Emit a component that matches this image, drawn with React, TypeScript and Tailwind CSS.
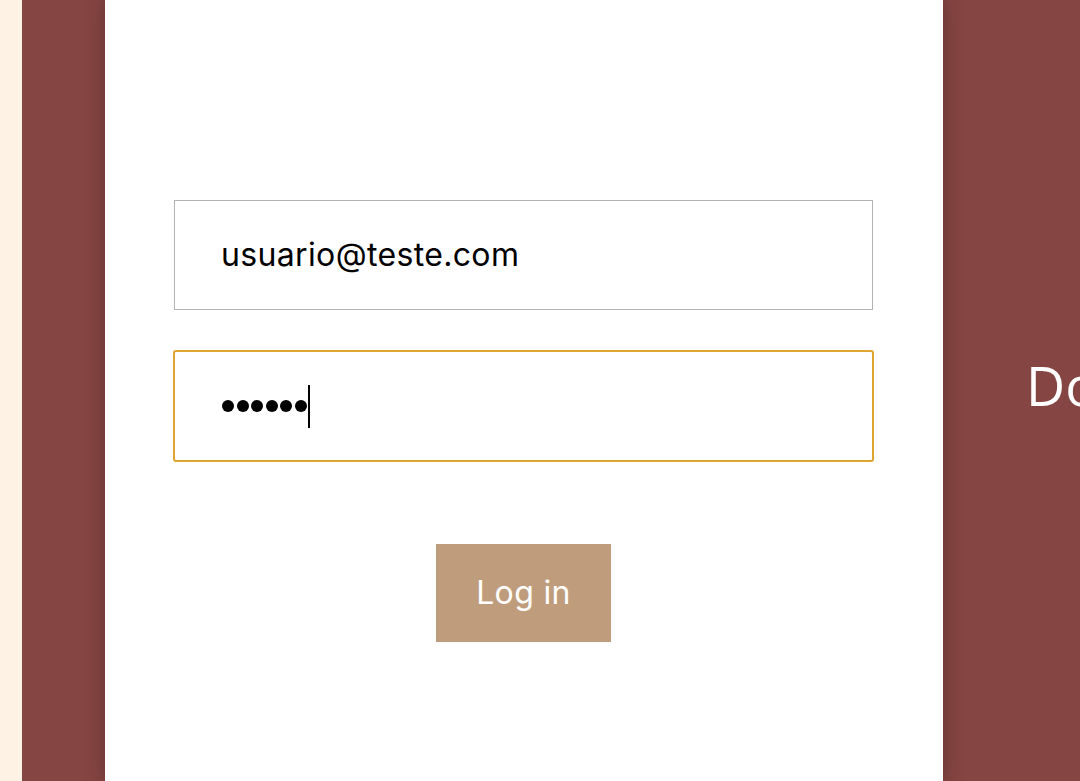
export default function App() {
  return (
    <main className="flex h-[781px] w-full overflow-hidden bg-[#fdf2e4]">
      <div className="w-[22px] shrink-0 bg-[#fdf2e4]" />
      <div className="w-[83px] shrink-0 bg-[#854542]" />

      <section className="relative z-10 flex w-[838px] shrink-0 flex-col items-center bg-white pt-[200px] shadow-[0_0_18px_rgba(0,0,0,0.28)] font-['Inter',sans-serif]">
        <div className="ml-[-1px] flex h-[110px] w-[699px] items-center border border-[#b3b3b3] pl-[46px] text-[32px] tracking-[0.35px] text-black">
          usuario@teste.com
        </div>

        <div className="ml-[-1px] mt-[40px] flex h-[112px] w-[701px] items-center rounded-[3px] border-2 border-[#e0a431] pl-[47px]">
          <div className="flex items-center gap-[2.6px]">
            {[0, 1, 2, 3, 4, 5].map((i) => (
              <span key={i} className="h-[12px] w-[12px] rounded-full bg-black" />
            ))}
          </div>
          <span className="ml-[1px] h-[43px] w-[2px] bg-black" />
        </div>

        <button className="ml-[-1px] mt-[82px] h-[98px] w-[175px] bg-[#bf9d7c] text-[32px] tracking-[0.35px] text-white">
          Log in
        </button>
      </section>

      <div className="flex flex-1 items-center bg-[#854542] pl-[83px] pb-[10px]">
        <span className="whitespace-nowrap font-['Open_Sans',sans-serif] text-[54px] text-white">Do</span>
      </div>
    </main>
  );
}
